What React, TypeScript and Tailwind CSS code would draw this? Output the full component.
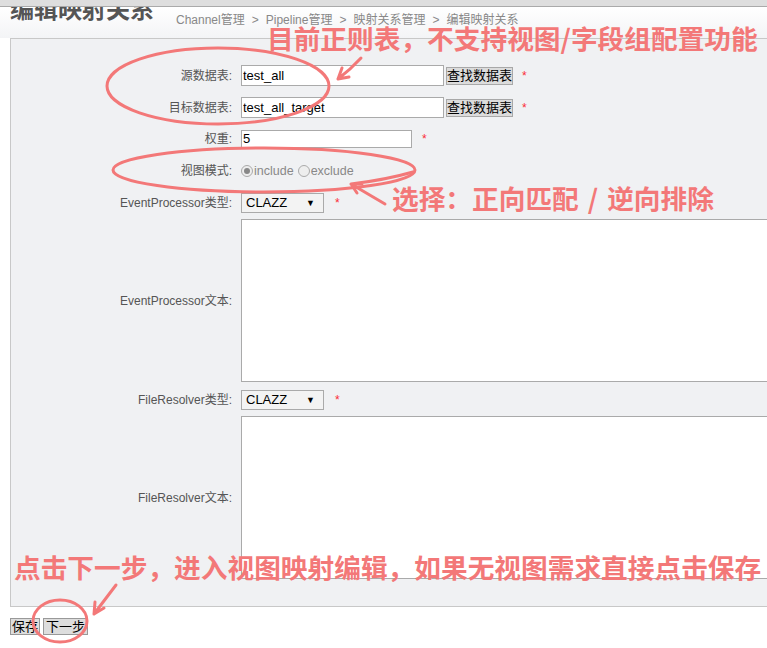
import React from 'react';

const ui = { fontFamily: '"Liberation Sans", "Noto Sans CJK SC", sans-serif' };
const note = { fontFamily: '"Noto Sans CJK SC", sans-serif' };

const Star = () => <span className="text-[12px] leading-none text-red-500">*</span>;

const Label = ({ text }: { text: string }) => (
  <div className="w-[230px] shrink-0 pr-[9px] text-right text-[12px] leading-[14px] text-[#555]">{text}</div>
);

const FindButton = () => (
  <button className="h-[18px] border border-[#a8a8a8] bg-[#dcdcdc] px-0 text-[13px] leading-[16px] text-black">
    查找数据表
  </button>
);

const Select = () => (
  <div className="flex h-[20px] w-[83px] items-center justify-between border border-[#aaa] bg-[#f3f3f3] pl-[4px] pr-[8px] text-[13px] leading-[16px] text-black">
    <span>CLAZZ</span>
    <span className="text-[9px]">▼</span>
  </div>
);

const Radio = ({ checked, label }: { checked?: boolean; label: string }) => (
  <span className="flex items-center text-[12.5px] leading-[14px] text-[#888]">
    <span className="flex h-[12px] w-[12px] items-center justify-center rounded-full border border-[#aaa] bg-[#eee]">
      {checked && <span className="h-[6px] w-[6px] rounded-full bg-[#888]" />}
    </span>
    <span className="ml-px">{label}</span>
  </span>
);

const Sep = () => <span className="mx-[7px]">&gt;</span>;

export default function App() {
  return (
    <div className="relative h-[648px] w-[767px] overflow-hidden bg-white" style={ui}>
      {/* top strip */}
      <div className="h-[7px] border-b border-[#aaa] bg-[#dedede]" />
      <div className="flex h-[31px] items-start overflow-hidden bg-gradient-to-b from-white to-[#f3f4f6] pl-[10px]">
        <h1 className="mt-[-14px] text-[24px] font-bold leading-[30px] text-[#555]" style={note}>编辑映射关系</h1>
        <div className="ml-[22px] mt-[6px] text-[12px] leading-[14px] text-[#888]">
          Channel管理<Sep />Pipeline管理<Sep />映射关系管理<Sep />编辑映射关系
        </div>
      </div>

      {/* form panel */}
      <div className="ml-[10px] w-[800px] border border-[#c8c8c8] bg-[#f0f1f3] pt-[26px] pb-[27px]">
        <div className="flex h-[21px] items-center">
          <Label text="源数据表:" />
          <input readOnly value="test_all" className="h-[21px] w-[203px] border border-[#aaa] bg-white px-px text-[13px] text-black" />
          <span className="ml-[2px] flex"><FindButton /></span>
          <span className="ml-[9px] flex"><Star /></span>
        </div>
        <div className="mt-[11px] flex h-[21px] items-center">
          <Label text="目标数据表:" />
          <input readOnly value="test_all_target" className="h-[21px] w-[203px] border border-[#aaa] bg-white px-px text-[13px] text-black" />
          <span className="ml-[2px] flex"><FindButton /></span>
          <span className="ml-[9px] flex"><Star /></span>
        </div>
        <div className="mt-[12px] flex h-[18px] items-center">
          <Label text="权重:" />
          <input readOnly value="5" className="h-[18px] w-[171px] border border-[#aaa] bg-white px-px text-[13px] text-black" />
          <span className="ml-[10px] flex"><Star /></span>
        </div>
        <div className="mt-[14px] flex h-[18px] items-center">
          <Label text="视图模式:" />
          <Radio checked label="include" />
          <span className="ml-[4px] flex"><Radio label="exclude" /></span>
        </div>
        <div className="mt-[13px] flex h-[20px] items-center">
          <Label text="EventProcessor类型:" />
          <Select />
          <span className="ml-[11px] flex"><Star /></span>
        </div>
        <div className="mt-[6px] flex h-[163px] items-center">
          <Label text="EventProcessor文本:" />
          <div className="h-[163px] flex-1 border border-[#aaa] bg-white" />
        </div>
        <div className="mt-[8px] flex h-[20px] items-center">
          <Label text="FileResolver类型:" />
          <Select />
          <span className="ml-[11px] flex"><Star /></span>
        </div>
        <div className="mt-[6px] flex h-[163px] items-center">
          <Label text="FileResolver文本:" />
          <div className="h-[163px] flex-1 border border-[#aaa] bg-white" />
        </div>
      </div>

      <div className="ml-[10px] mt-[11px] flex gap-[3px]">
        <button className="h-[17px] border border-[#999] bg-[#ddd] px-px text-[13px] leading-[15px] text-black">保存</button>
        <button className="h-[17px] border border-[#999] bg-[#ddd] px-[2px] text-[13px] leading-[15px] text-black">下一步</button>
      </div>

      {/* annotations */}
      <svg className="pointer-events-none absolute left-0 top-0" width="767" height="648" fill="none" stroke="#f37878" strokeWidth="3" strokeLinecap="round">
        <ellipse cx="218" cy="86" rx="111" ry="38" />
        <path d="M361 58 Q350 70 338 79 M338 79 L349 77 M338 79 L342 68" />
        <ellipse cx="264" cy="170" rx="151" ry="22" />
        <path d="M385 204 L351 184 M351 184 Q385 180 413 172 M351 184 L362 184 M351 184 L357 193" />
        <ellipse cx="60" cy="621" rx="27" ry="21" />
        <path d="M116 585 L94 614 M94 614 L95 602 M94 614 L104 608" />
      </svg>
      <div className="absolute left-[267px] top-[21px] whitespace-nowrap text-[26.7px] font-bold leading-[34px] text-[#f37878]" style={note}>
        目前正则表，不支持视图/字段组配置功能
      </div>
      <div className="absolute left-[392px] top-[181px] whitespace-nowrap text-[26.7px] font-bold leading-[34px] text-[#f37878]" style={note}>
        选择：正向匹配<span className="mx-[9px]">/</span>逆向排除
      </div>
      <div className="absolute left-[14px] top-[550px] whitespace-nowrap text-[26.7px] font-bold leading-[34px] text-[#f37878]" style={note}>
        点击下一步，进入视图映射编辑，如果无视图需求直接点击保存
      </div>
    </div>
  );
}
